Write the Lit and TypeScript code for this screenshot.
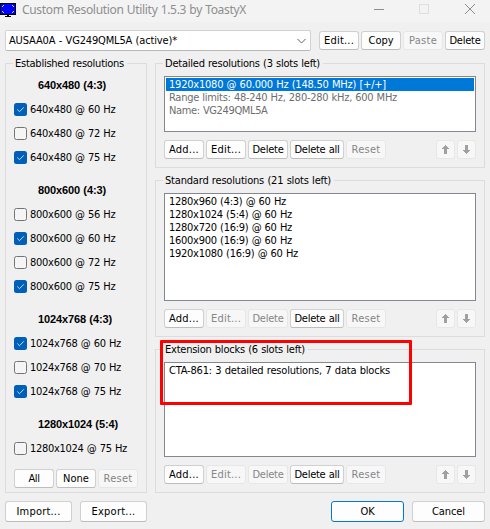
import { LitElement, html, css, svg } from "lit";
import { customElement, property, query } from "lit/decorators.js";
import { classMap } from "lit/directives/class-map.js";

/** A single line of text tracked so that it fills a given width. */
@customElement("fit-text")
class FitText extends LitElement {
  @property() text = "";
  @property({ type: Number }) w = 0;
  @query("span") span!: HTMLSpanElement;
  static styles = css`
    :host { display: block; flex: none; white-space: pre; word-spacing: 0.4px; }
    span { display: inline-block; }
  `;
  updated() {
    this.span.style.letterSpacing = "0";
    const natural = this.span.getBoundingClientRect().width;
    this.span.style.letterSpacing = `${(this.w - natural) / this.text.length}px`;
  }
  render() {
    return html`<span>${this.text}</span>`;
  }
}

const fit = (text: string, w: number) => html`<fit-text .text=${text} .w=${w}></fit-text>`;

@customElement("push-button")
class PushButton extends LitElement {
  @property() label = "";
  @property({ type: Number }) w = 0;
  @property({ type: Boolean }) off = false;
  @property({ type: Boolean }) primary = false;
  @property() arrow = "";
  static styles = css`
    :host { display: block; width: 40px; height: 19px; flex: none; }
    .b {
      box-sizing: border-box; width: 100%; height: 100%;
      display: flex; align-items: center; justify-content: center;
      border: 1px solid #d0d0d0; border-bottom-color: #bdbdbd; border-radius: 3px;
      background: #fdfdfd; color: #000; line-height: 15px;
    }
    .off { border-color: #e7e7e7; background: #f7f7f7; color: #868686; }
    .primary { border-color: #0078d4; }
    svg { display: block; }
  `;
  render() {
    return html`<div class=${classMap({ b: true, off: this.off, primary: this.primary })}>
      ${this.arrow
        ? html`<svg width="7" height="9" viewBox="0 0 7 9" shape-rendering="crispEdges">
            ${this.arrow === "up"
              ? svg`<path fill="#a0a0a0" d="M3 0h1v1h1v1h1v1h1v1H5v5H2V4H0V3h1V2h1V1h1z"/>`
              : svg`<path fill="#a0a0a0" d="M3 9h1V8h1V7h1V6h1V5H5V0H2v5H0v1h1v1h1v1h1z"/>`}
          </svg>`
        : fit(this.label, this.w)}
    </div>`;
  }
}

const btn = (label: string, w: number, off = false, cls = "", primary = false) =>
  html`<push-button class=${cls} .label=${label} .w=${w} .off=${off} .primary=${primary}></push-button>`;

type Line = [string, number, string?];

@customElement("block-group")
class BlockGroup extends LitElement {
  @property() caption = "";
  @property({ type: Number }) w = 0;
  @property({ attribute: false }) lines: Line[] = [];
  @property({ type: Boolean }) locked = false;
  static styles = css`
    :host {
      position: relative; box-sizing: border-box; display: flex; flex-direction: column;
      border: 1px solid #dcdcdc; padding: 12px 8px 8px;
    }
    .legend { position: absolute; left: 7px; top: -8px; padding: 0 3px 0 2px; background: #f0f0f0; line-height: 15px; }
    .list { flex: 1; border: 1px solid #828790; background: #fff; padding: 1px; }
    .line { height: 13px; line-height: 13px; padding-left: 3px; }
    .muted { color: #6d6d6d; }
    .sel { background: #0078d7; color: #fff; }
    .bar { display: flex; gap: 2px; margin-top: 8px; }
    .wide { width: 54px; }
    .reset { margin: 0 auto 0 0; }
    .arrow { width: 19px; }
  `;
  render() {
    return html`
      <div class="legend">${fit(this.caption, this.w)}</div>
      <div class="list">
        ${this.lines.map(([t, w, c]) => html`<div class="line ${c ?? ""}">${fit(t, w)}</div>`)}
      </div>
      <div class="bar">
        ${btn("Add...", 30)}${btn("Edit...", 30, this.locked)}${btn("Delete", 31, this.locked)}
        ${btn("Delete all", 45, false, "wide")}${btn("Reset", 29, true, "reset")}
        <push-button class="arrow" off arrow="up"></push-button>
        <push-button class="arrow" off arrow="down"></push-button>
      </div>`;
  }
}

const established: { head: [string, number]; items: [string, number, boolean][] }[] = [
  { head: ["640x480 (4:3)", 68], items: [["640x480 @ 60 Hz", 85.5, true], ["640x480 @ 72 Hz", 85.5, false], ["640x480 @ 75 Hz", 85.5, true]] },
  { head: ["800x600 (4:3)", 68], items: [["800x600 @ 56 Hz", 85.5, false], ["800x600 @ 60 Hz", 85.5, true], ["800x600 @ 72 Hz", 85.5, false], ["800x600 @ 75 Hz", 85.5, true]] },
  { head: ["1024x768 (4:3)", 74], items: [["1024x768 @ 60 Hz", 91, true], ["1024x768 @ 70 Hz", 91, false], ["1024x768 @ 75 Hz", 91, true]] },
  { head: ["1280x1024 (5:4)", 80], items: [["1280x1024 @ 75 Hz", 97, false]] },
];

@customElement("app-root")
class AppRoot extends LitElement {
  static styles = css`
    :host {
      position: relative; display: flex; flex-direction: column; box-sizing: border-box;
      width: 490px; height: 529px; overflow: hidden; background: #f0f0f0; color: #000;
      font: 11px "DejaVu Sans Condensed", "DejaVu Sans", sans-serif; font-stretch: condensed;
    }
    .title {
      display: flex; align-items: center; height: 22px; flex: none; background: #f3f3f3;
      color: #8e8e8e; font: 12px/20px "Noto Sans", sans-serif;
    }
    .title svg { display: block; flex: none; }
    .name { margin: -3px auto 0 5px; word-spacing: 1px; }
    .controls { margin-right: 14px; }
    .top { display: flex; align-items: center; height: 21px; margin: 8px 5px 0; gap: 2px; flex: none; }
    .combo {
      box-sizing: border-box; width: 306px; height: 21px; margin-right: 6px; padding: 0 4px 0 3px;
      display: flex; align-items: center; justify-content: space-between;
      background: #fff; border: 1px solid #d2d2d2; border-bottom-color: #b8b8b8; border-radius: 2px;
    }
    .main { display: flex; gap: 8px; height: 430px; margin: 12px 5px 0; flex: none; }
    .est {
      position: relative; box-sizing: border-box; width: 142px; border: 1px solid #dcdcdc;
      padding: 9px 8px 8px; display: flex; flex-direction: column;
    }
    .legend { position: absolute; left: 7px; top: -8px; padding: 0 3px 0 2px; background: #f0f0f0; line-height: 15px; }
    .set { margin-bottom: 9px; }
    .head { height: 24px; display: flex; align-items: center; padding-left: 24px; font: bold 11px "Liberation Sans", Arial, sans-serif; }
    .check { height: 24px; display: flex; align-items: center; gap: 3px; }
    .check svg { display: block; flex: none; }
    .bar { display: flex; gap: 2px; margin-top: auto; }
    .col { width: 330px; display: flex; flex-direction: column; gap: 12px; }
    .g1 { height: 105px; }
    .g2 { height: 157px; }
    .g3 { height: 144px; }
    .foot { display: flex; gap: 8px; margin: 8px 5px 0; }
    .file { width: 67px; height: 21px; }
    .ok, .cancel { width: 73px; height: 21px; }
    .ok { margin-left: auto; }
    .mark { position: absolute; left: 160px; top: 340px; width: 252px; height: 65px; box-sizing: border-box; border: 3px solid #f00; border-radius: 1px; }
  `;
  box(on: boolean) {
    return on
      ? html`<svg width="13" height="13" viewBox="0 0 13 13"><rect width="13" height="13" rx="2.5" fill="#005fb8" /><path d="M3.3 6.5 L5.5 8.7 L9.8 4.3" fill="none" stroke="#c4dcf2" stroke-width="1" /></svg>`
      : html`<svg width="13" height="13" viewBox="0 0 13 13"><rect x=".5" y=".5" width="12" height="12" rx="2" fill="#f5f5f5" stroke="#757575" /></svg>`;
  }
  render() {
    return html`
      <div class="title">
        <svg width="17" height="22" viewBox="0 0 17 22" shape-rendering="crispEdges">
          <rect x="0" y="3" width="16" height="12" fill="#000" />
          <rect x="7" y="15" width="2" height="1" fill="#000" />
          <rect x="5" y="16" width="6" height="1" fill="#000" />
          <rect x="1" y="4" width="14" height="10" fill="#00f" />
          <g fill="#d8d8ff">
            <rect x="3" y="5" width="1" height="1" /><rect x="2" y="6" width="1" height="1" />
            <rect x="12" y="5" width="1" height="1" /><rect x="13" y="6" width="1" height="1" />
            <rect x="3" y="12" width="1" height="1" /><rect x="2" y="11" width="1" height="1" />
            <rect x="12" y="12" width="1" height="1" /><rect x="13" y="11" width="1" height="1" />
          </g>
        </svg>
        <div class="name">${fit("Custom Resolution Utility 1.5.3 by ToastyX", 224)}</div>
        <svg class="controls" width="103" height="22" viewBox="0 0 103 22" fill="none">
          <path d="M1 9.5 H11" stroke="#8e8e8e" />
          <rect x="46.5" y="4.5" width="9" height="9" stroke="#dedede" />
          <path d="M92 4 L102 14 M102 4 L92 14" stroke="#8e8e8e" />
        </svg>
      </div>
      <div class="top">
        <div class="combo">
          ${fit("AUSAA0A - VG249QML5A (active)*", 168)}
          <svg width="9" height="6" viewBox="0 0 9 6"><path d="M.5 1 L4.5 5 L8.5 1" fill="none" stroke="#606060" /></svg>
        </div>
        ${btn("Edit...", 30)}${btn("Copy", 25)}${btn("Paste", 28, true)}${btn("Delete", 31)}
      </div>
      <div class="main">
        <div class="est">
          <div class="legend">${fit("Established resolutions", 109)}</div>
          ${established.map(
            (s) => html`<div class="set">
              <div class="head">${fit(...s.head)}</div>
              ${s.items.map(([t, w, on]) => html`<div class="check">${this.box(on)}${fit(t, w)}</div>`)}
            </div>`
          )}
          <div class="bar">${btn("All", 11)}${btn("None", 26)}${btn("Reset", 29, true)}</div>
        </div>
        <div class="col">
          <block-group class="g1" .caption=${"Detailed resolutions (3 slots left)"} .w=${155}
            .lines=${[
              ["1920x1080 @ 60.000 Hz (148.50 MHz) [+/+]", 217, "sel"],
              ["Range limits: 48-240 Hz, 280-280 kHz, 600 MHz", 228, "muted"],
              ["Name: VG249QML5A", 98.5, "muted"],
            ] as Line[]}></block-group>
          <block-group class="g2" locked .caption=${"Standard resolutions (21 slots left)"} .w=${166}
            .lines=${[
              ["1280x960 (4:3) @ 60 Hz", 117],
              ["1280x1024 (5:4) @ 60 Hz", 123],
              ["1280x720 (16:9) @ 60 Hz", 123],
              ["1600x900 (16:9) @ 60 Hz", 123],
              ["1920x1080 (16:9) @ 60 Hz", 129],
            ] as Line[]}></block-group>
          <block-group class="g3" locked .caption=${"Extension blocks (6 slots left)"} .w=${140}
            .lines=${[["CTA-861: 3 detailed resolutions, 7 data blocks", 221]] as Line[]}></block-group>
        </div>
      </div>
      <div class="foot">
        ${btn("Import...", 44, false, "file")}${btn("Export...", 44, false, "file")}
        ${btn("OK", 14, false, "ok", true)}${btn("Cancel", 33, false, "cancel")}
      </div>
      <div class="mark"></div>
    `;
  }
}
